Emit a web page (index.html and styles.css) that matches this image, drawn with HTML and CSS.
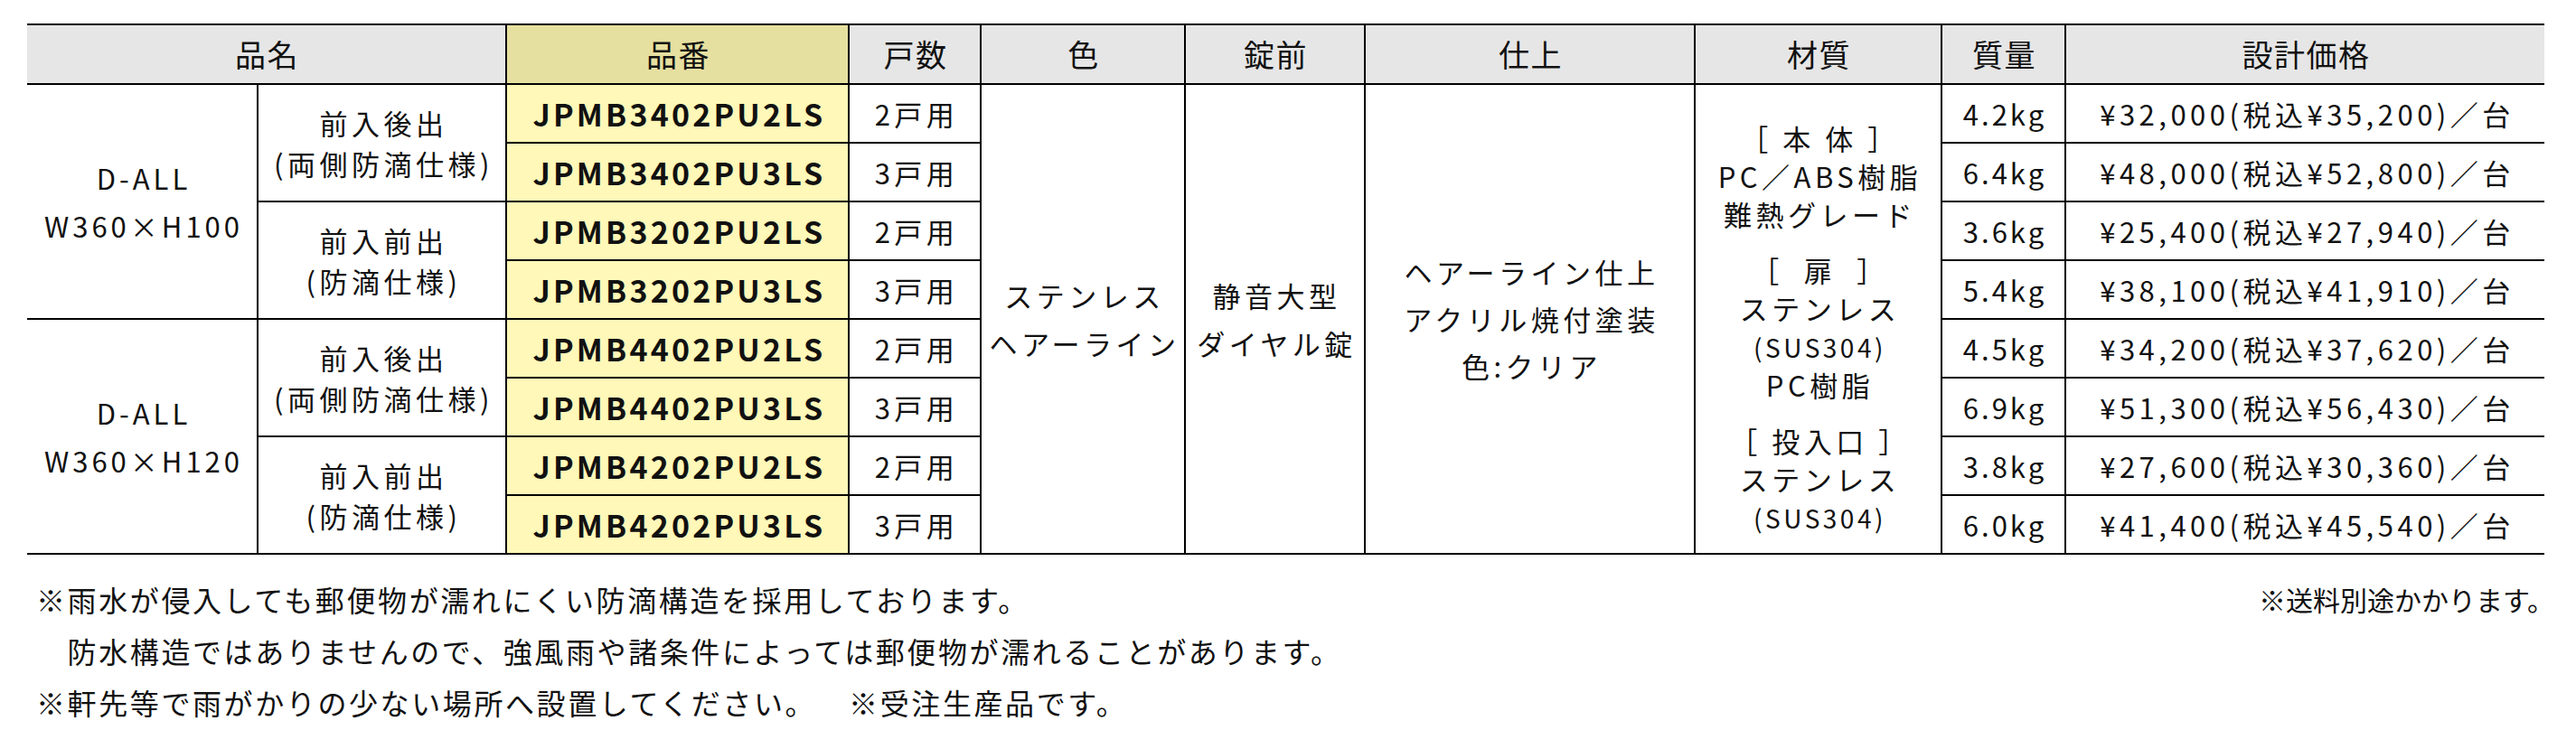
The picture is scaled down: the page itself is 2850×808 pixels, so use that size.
FILE: index.html
```html
<!DOCTYPE html>
<html lang="ja">
<head>
<meta charset="utf-8">
<title>D-ALL 仕様表</title>
<link rel="stylesheet" href="styles.css">
</head>
<body>
<div class="sheet">
  <table class="spec">
    <colgroup>
      <col class="c-name"><col class="c-type"><col class="c-code"><col class="c-units"><col class="c-color">
      <col class="c-lock"><col class="c-finish"><col class="c-mat"><col class="c-mass"><col class="c-price">
    </colgroup>
    <thead>
      <tr class="head-row">
        <th colspan="2" class="first">品名</th>
        <th class="code-head">品番</th>
        <th>戸数</th>
        <th>色</th>
        <th>錠前</th>
        <th>仕上</th>
        <th>材質</th>
        <th>質量</th>
        <th class="last">設計価格</th>
      </tr>
    </thead>
    <tbody>
      <tr>
        <td rowspan="4" class="first name">D-ALL<br>W360×H100</td>
        <td rowspan="2" class="type">前入後出<br>(両側防滴仕様)</td>
        <td class="code">JPMB3402PU2LS</td>
        <td>2戸用</td>
        <td rowspan="8" class="color">ステンレス<br>ヘアーライン</td>
        <td rowspan="8" class="lock">静音大型<br>ダイヤル錠</td>
        <td rowspan="8" class="finish">ヘアーライン仕上<br>アクリル焼付塗装<br>色:クリア</td>
        <td rowspan="8" class="mat">
          <div class="mat-group">［ 本 体 ］<br>PC／ABS樹脂<br>難熱グレード</div>
          <div class="mat-group">［&nbsp;&nbsp;扉&nbsp;&nbsp;］<br>ステンレス<br><span class="small">(SUS304)</span><br>PC樹脂</div>
          <div class="mat-group">［ 投入口 ］<br>ステンレス<br><span class="small">(SUS304)</span></div>
        </td>
        <td class="mass">4.2kg</td>
        <td class="last">¥32,000(税込¥35,200)／台</td>
      </tr>
      <tr>
        <td class="code">JPMB3402PU3LS</td>
        <td>3戸用</td>
        <td class="mass">6.4kg</td>
        <td class="last">¥48,000(税込¥52,800)／台</td>
      </tr>
      <tr>
        <td rowspan="2" class="type">前入前出<br>(防滴仕様)</td>
        <td class="code">JPMB3202PU2LS</td>
        <td>2戸用</td>
        <td class="mass">3.6kg</td>
        <td class="last">¥25,400(税込¥27,940)／台</td>
      </tr>
      <tr>
        <td class="code">JPMB3202PU3LS</td>
        <td>3戸用</td>
        <td class="mass">5.4kg</td>
        <td class="last">¥38,100(税込¥41,910)／台</td>
      </tr>
      <tr>
        <td rowspan="4" class="first name">D-ALL<br>W360×H120</td>
        <td rowspan="2" class="type">前入後出<br>(両側防滴仕様)</td>
        <td class="code">JPMB4402PU2LS</td>
        <td>2戸用</td>
        <td class="mass">4.5kg</td>
        <td class="last">¥34,200(税込¥37,620)／台</td>
      </tr>
      <tr>
        <td class="code">JPMB4402PU3LS</td>
        <td>3戸用</td>
        <td class="mass">6.9kg</td>
        <td class="last">¥51,300(税込¥56,430)／台</td>
      </tr>
      <tr>
        <td rowspan="2" class="type">前入前出<br>(防滴仕様)</td>
        <td class="code">JPMB4202PU2LS</td>
        <td>2戸用</td>
        <td class="mass">3.8kg</td>
        <td class="last">¥27,600(税込¥30,360)／台</td>
      </tr>
      <tr>
        <td class="code">JPMB4202PU3LS</td>
        <td>3戸用</td>
        <td class="mass">6.0kg</td>
        <td class="last">¥41,400(税込¥45,540)／台</td>
      </tr>
    </tbody>
  </table>
  <div class="notes">
    <div class="note-list">
      <p>※雨水が侵入しても郵便物が濡れにくい防滴構造を採用しております。</p>
      <p>　防水構造ではありませんので、強風雨や諸条件によっては郵便物が濡れることがあります。</p>
      <p>※軒先等で雨がかりの少ない場所へ設置してください。<span class="gap"></span>※受注生産品です。</p>
    </div>
    <p class="note-right">※送料別途かかります。</p>
  </div>
</div>
</body>
</html>
```

FILE: styles.css
```css
html, body {
  margin: 0;
  padding: 0;
  background: #ffffff;
}

body {
  font-family: "Noto Sans CJK JP", "Noto Sans", sans-serif;
  color: #111111;
}

.sheet {
  width: 2785px;
  padding: 26px 0 0 30px;
}

.spec {
  border-collapse: collapse;
  table-layout: fixed;
  width: 2785px;
}

.c-name { width: 255px; }
.c-type { width: 275px; }
.c-code { width: 379px; }
.c-units { width: 146px; }
.c-color { width: 226px; }
.c-lock { width: 199px; }
.c-finish { width: 365px; }
.c-mat { width: 273px; }
.c-mass { width: 137px; }
.c-price { width: 530px; }

.spec th,
.spec td {
  border: 2px solid #000000;
  padding: 0 0 0 4px;
  text-align: center;
  vertical-align: middle;
  font-size: 31px;
  letter-spacing: 4.5px;
  line-height: 40px;
  white-space: nowrap;
  font-weight: 400;
}

.spec .first { border-left: none; }
.spec .last { border-right: none; }

.head-row { height: 66px; }
.spec tbody tr { height: 65px; }

.spec th {
  background: #e6e6e6;
  font-size: 34px;
  letter-spacing: 1.5px;
  padding-left: 2px;
}

.spec th.code-head { background: #e6e0a0; }

.spec td.code {
  background: #fff8b8;
  font-size: 34px;
  font-weight: 700;
  letter-spacing: 3.2px;
}

.spec td.mass {
  letter-spacing: 3px;
  padding-left: 3px;
}

.spec td.name { line-height: 53px; letter-spacing: 4px; }
.spec td.type { line-height: 45px; }
.spec td.color,
.spec td.lock { line-height: 53px; }
.spec td.finish { line-height: 52px; }

.spec td.mat {
  vertical-align: top;
  padding-top: 38px;
  line-height: 42px;
}

.mat-group + .mat-group { margin-top: 20px; }

.small {
  font-size: 28px;
  letter-spacing: 3.5px;
}

.notes {
  display: flex;
  justify-content: space-between;
  align-items: flex-start;
  margin-top: 21px;
}

.note-list {
  padding-left: 10px;
}

.note-list p,
.note-right {
  margin: 0;
  font-size: 32px;
  line-height: 57px;
  letter-spacing: 2.6px;
  white-space: nowrap;
}

.gap {
  display: inline-block;
  width: 36px;
}

.note-right {
  font-size: 30px;
  letter-spacing: 0;
  margin-right: -11px;
}
```
